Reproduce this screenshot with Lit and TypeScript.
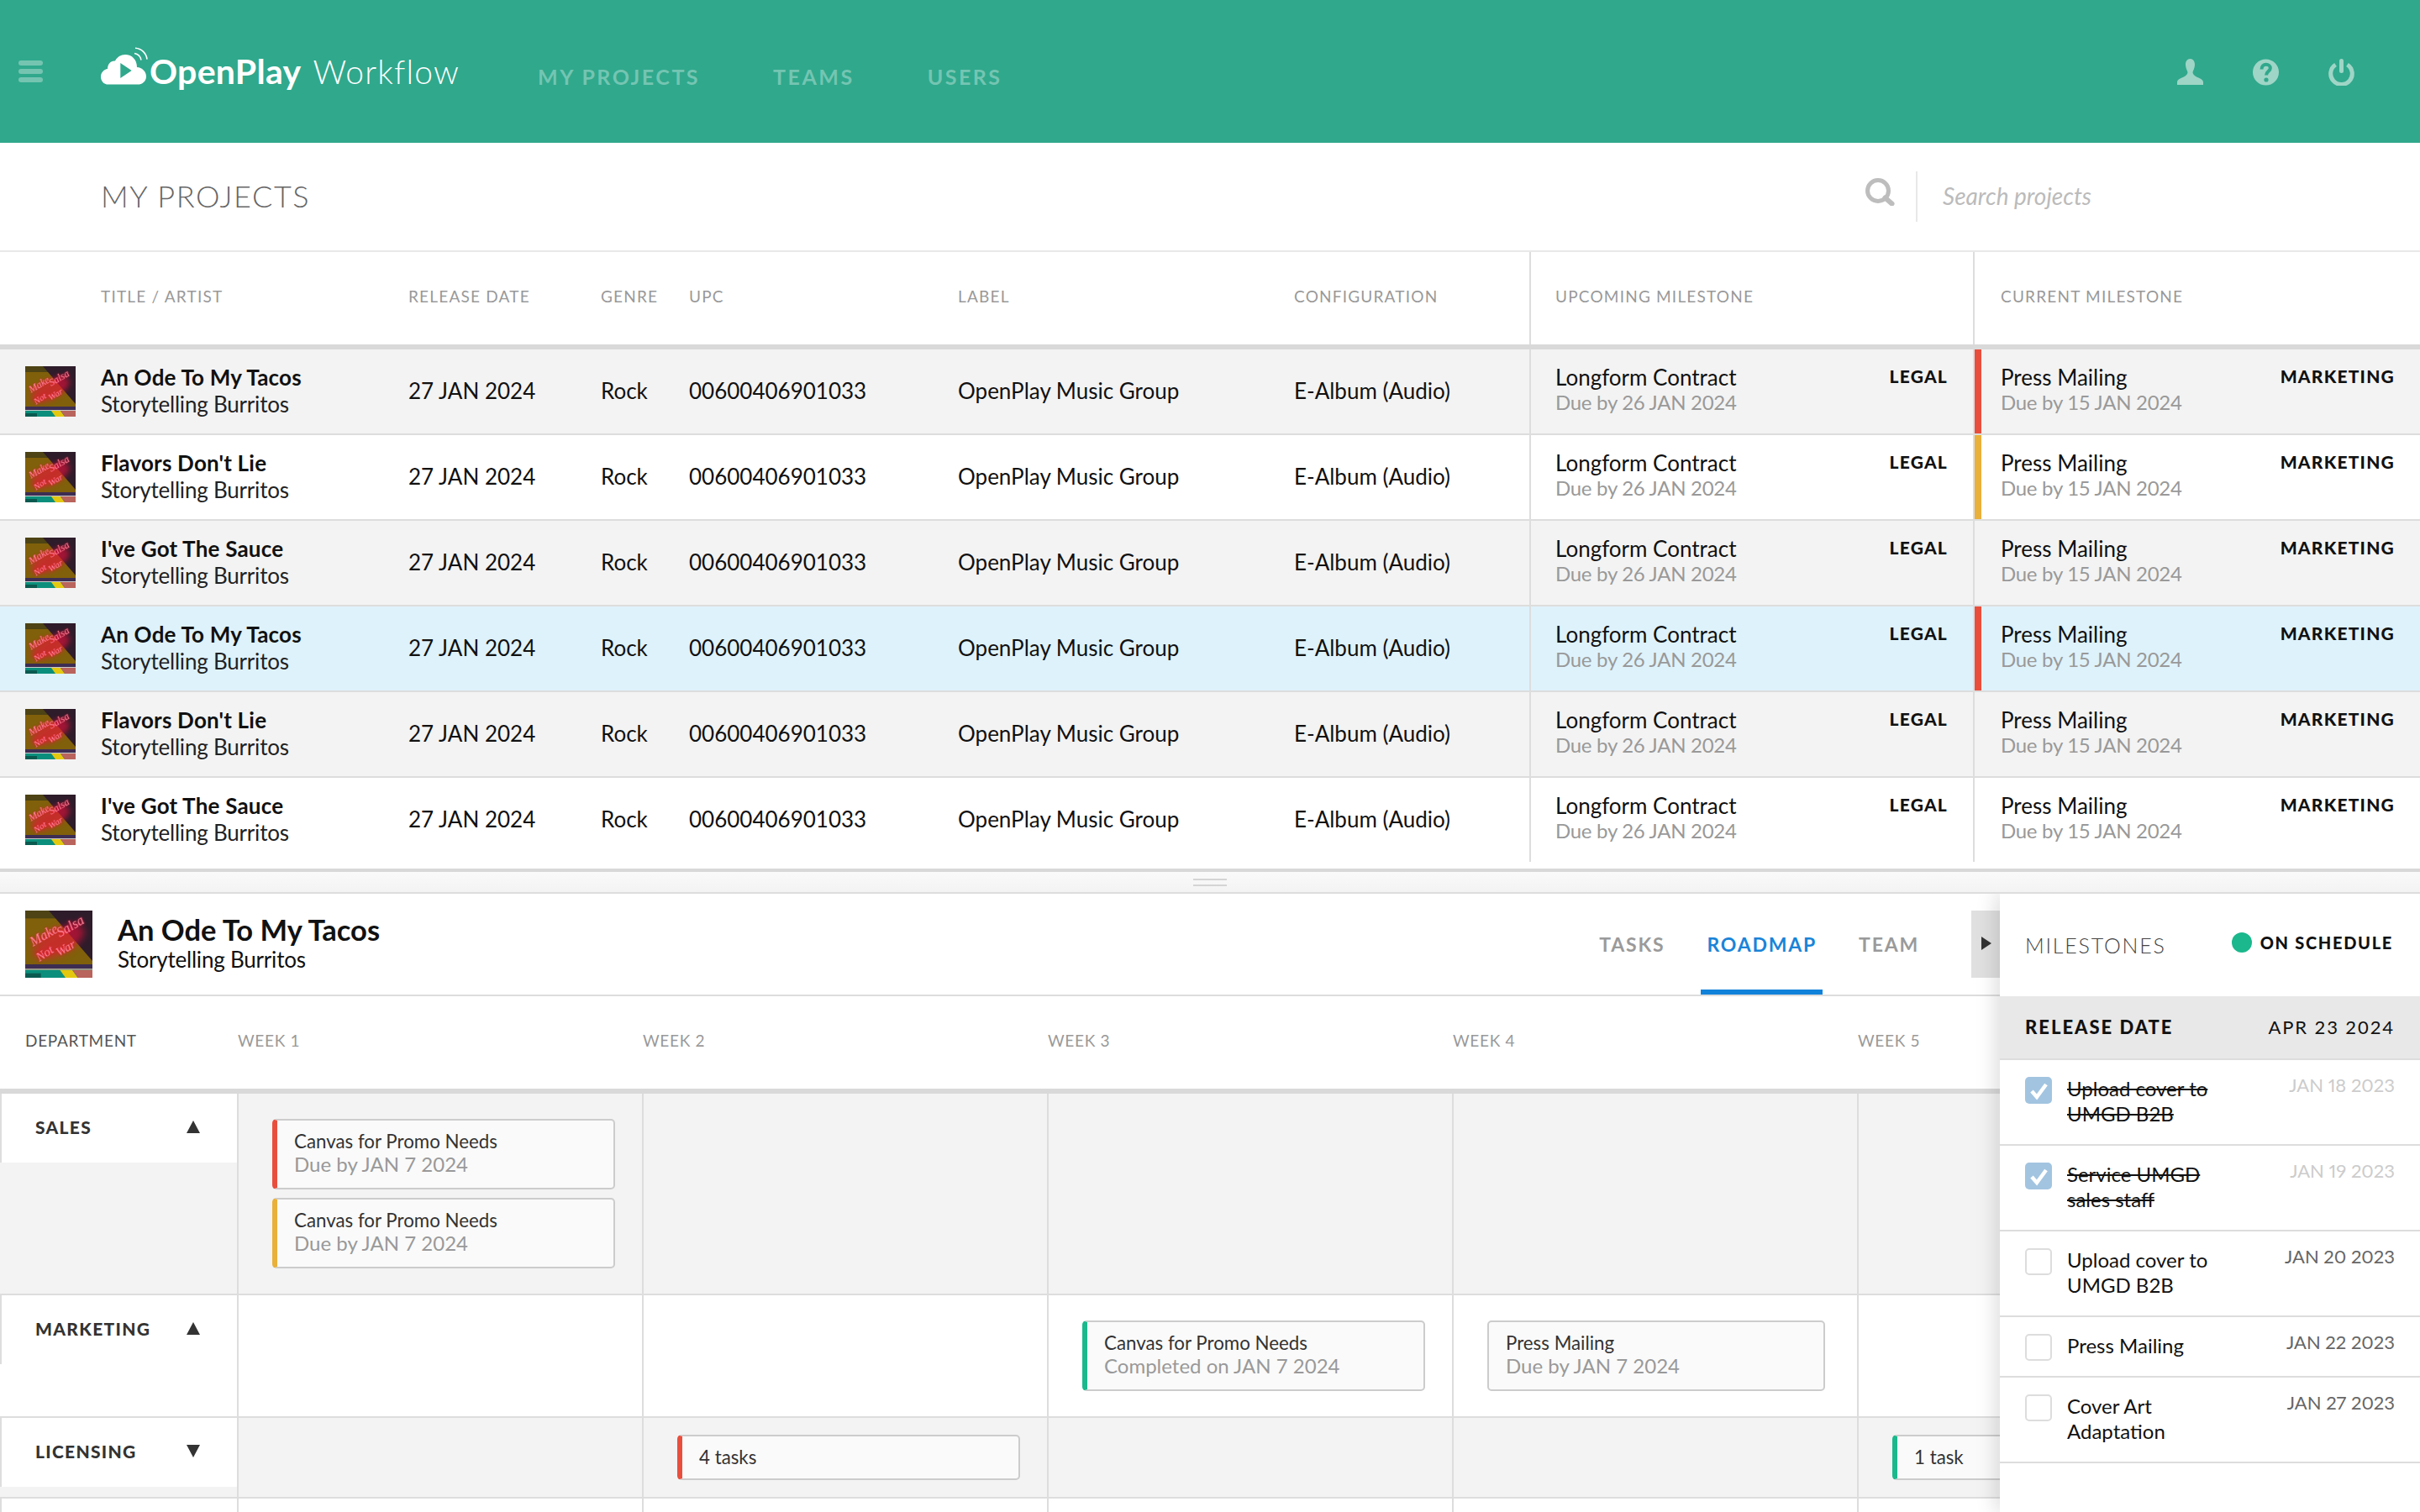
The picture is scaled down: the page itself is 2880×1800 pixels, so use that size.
import { LitElement, html, svg, css } from 'lit';
import { customElement } from 'lit/decorators.js';

const PROJECTS = [
  { title: 'An Ode To My Tacos', row: 'gray', bar: 'red' },
  { title: "Flavors Don't Lie", row: 'white', bar: 'yellow' },
  { title: "I've Got The Sauce", row: 'gray', bar: '' },
  { title: 'An Ode To My Tacos', row: 'blue', bar: 'red' },
  { title: "Flavors Don't Lie", row: 'gray', bar: '' },
  { title: "I've Got The Sauce", row: 'white', bar: '' },
];

const MILESTONES = [
  { lines: ['Upload cover to', 'UMGD B2B'], date: 'JAN 18 2023', done: true },
  { lines: ['Service UMGD', 'sales staff'], date: 'JAN 19 2023', done: true },
  { lines: ['Upload cover to', 'UMGD B2B'], date: 'JAN 20 2023', done: false },
  { lines: ['Press Mailing'], date: 'JAN 22 2023', done: false },
  { lines: ['Cover Art', 'Adaptation'], date: 'JAN 27 2023', done: false },
];

const albumArt = (cls: string) => html`
  <svg class=${cls} viewBox="0 0 60 60" aria-hidden="true">
    ${svg`
      <rect width="60" height="60" fill="#80600a"></rect>
      <rect width="60" height="7" fill="#4d4314"></rect>
      <polygon points="21,0 60,0 60,45" fill="#2e1c2a"></polygon>
      <ellipse class="glow" cx="30" cy="28" rx="25" ry="11" transform="rotate(-28 30 28)"></ellipse>
      <g class="neon">
        <text x="7" y="32" font-size="12" transform="rotate(-30 7 32)">Make</text>
        <text x="31" y="24" font-size="12" transform="rotate(-30 31 24)">Salsa</text>
        <text x="13" y="46" font-size="11" transform="rotate(-34 13 46)">Not</text>
        <text x="30" y="41" font-size="11" transform="rotate(-30 30 41)">War</text>
      </g>
      <rect y="48" width="60" height="4" fill="#3d2d52"></rect>
      <rect y="52" width="60" height="1" fill="#c9c9c9"></rect>
      <rect y="53" width="60" height="7" fill="#0b8f7c"></rect>
      <rect y="56" width="14" height="4" fill="#0a5a50"></rect>
      <polygon points="31,53 42,53 47,60 36,60" fill="#e4c810"></polygon>
      <polygon points="42,53 60,53 60,60 47,60" fill="#b9645c"></polygon>
    `}
  </svg>
`;

@customElement('app-root')
export class AppRoot extends LitElement {
  static styles = css`
    :host {
      display: block;
      width: 2880px;
      height: 1800px;
      overflow: hidden;
      background: #fff;
      color: #111;
      font-family: 'Lato', 'Open Sans', sans-serif;
      font-size: 26px;
    }

    /* cover art */
    .glow {
      fill: #f0103c;
      opacity: 0.6;
      filter: blur(3px);
    }
    .neon text {
      font-family: 'Liberation Serif', serif;
      font-style: italic;
      fill: #ff8a9e;
      filter: drop-shadow(0 0 1px #ff0033);
    }

    /* top bar */
    .topbar {
      height: 170px;
      background: #30a88c;
      display: flex;
      align-items: flex-start;
    }
    .burger {
      width: 29px;
      margin: 72px 0 0 22px;
      display: flex;
      flex-direction: column;
      gap: 4px;
    }
    .burger span {
      height: 6px;
      border-radius: 3px;
      background: #75c4b1;
    }
    .logo {
      display: flex;
      align-items: flex-start;
      margin-left: 67px;
      margin-top: 54px;
      color: #fff;
      width: 522px;
    }
    .logo svg {
      width: 60px;
      height: 50px;
      flex: none;
    }
    .logo b {
      font-size: 41px;
      font-weight: 700;
      line-height: 50px;
      margin: 6px 0 0 0;
      letter-spacing: 0.3px;
    }
    .logo i {
      font-style: normal;
      font-size: 39px;
      font-weight: 300;
      line-height: 50px;
      margin: 6px 0 0 14px;
      letter-spacing: 1.2px;
    }
    .nav {
      display: flex;
      gap: 87px;
      margin-top: 74px;
      font-size: 25px;
      line-height: 34px;
      font-weight: 700;
      letter-spacing: 2.5px;
      color: #74c5b2;
    }
    .top-icons {
      margin: 70px 78px 0 auto;
      display: flex;
      gap: 59px;
    }
    .top-icons svg {
      display: block;
      height: 32px;
      width: 31px;
    }

    /* page title */
    .titlebar {
      height: 128px;
      border-bottom: 2px solid #e8e8e8;
      display: flex;
      align-items: center;
      padding-left: 120px;
    }
    .titlebar h1 {
      margin: -3px 0 0;
      font-size: 36px;
      font-weight: 300;
      letter-spacing: 1.6px;
      color: #666;
    }
    .search {
      margin-left: auto;
      width: 661px;
      height: 60px;
      display: flex;
      align-items: center;
    }
    .search svg {
      width: 36px;
      height: 33px;
      margin-bottom: 12px;
    }
    .search span {
      margin-left: 25px;
      height: 60px;
      line-height: 58px;
      padding-left: 30px;
      border-left: 2px solid #e8e8e8;
      font-size: 28px;
      font-style: italic;
      color: #bbb;
    }

    /* projects table */
    .cols {
      display: grid;
      grid-template-columns: 120px 366px 229px 105px 320px 400px 280px 528px 532px;
    }
    .thead {
      height: 110px;
      border-bottom: 6px solid #d9d9d9;
      font-size: 19px;
      letter-spacing: 1.2px;
      color: #999;
      align-items: center;
    }
    .thead > div {
      padding-bottom: 6px;
    }
    .thead .ms {
      box-sizing: border-box;
      height: 110px;
      display: flex;
      align-items: center;
      border-left: 2px solid #ddd;
    }
    .thead .ms.up {
      padding-left: 29px;
    }
    .thead .ms.cur {
      padding-left: 31px;
    }
    .row {
      height: 100px;
      border-bottom: 2px solid #ddd;
      align-items: center;
    }
    .row.last {
      border-bottom: 0;
    }
    .row.gray {
      background: #f3f3f3;
    }
    .row.white {
      background: #fff;
    }
    .row.blue {
      background: #def2fb;
    }
    .row > div {
      padding-bottom: 2px;
    }
    .thumb {
      display: block;
      width: 60px;
      height: 60px;
      margin-left: 30px;
    }
    .name {
      font-weight: 700;
      line-height: 32px;
      letter-spacing: 0.2px;
      color: #111;
    }
    .artist {
      line-height: 32px;
      letter-spacing: -0.2px;
      color: #222;
    }
    .row .ms {
      align-self: stretch;
      border-left: 2px solid #ddd;
      display: flex;
      padding-bottom: 0;
    }
    .bar {
      width: 8px;
      flex: none;
    }
    .bar.red {
      background: #e94e3d;
    }
    .bar.yellow {
      background: #e9b03a;
    }
    .ms-body {
      flex: 1;
      display: flex;
      justify-content: space-between;
      padding-right: 30px;
    }
    .ms.up .ms-body {
      padding-left: 29px;
    }
    .ms.cur .ms-body {
      padding-left: 23px;
    }
    .ms-text {
      padding-top: 18px;
      line-height: 30px;
    }
    .due {
      color: #999;
      font-size: 24px;
      letter-spacing: -0.3px;
    }
    .tag {
      padding-top: 17px;
      line-height: 30px;
      font-size: 21px;
      font-weight: 900;
      letter-spacing: 1.2px;
      color: #111;
    }
    .tail {
      height: 8px;
    }
    .handle {
      height: 24px;
      border-top: 4px solid #d8d8d8;
      border-bottom: 2px solid #ddd;
      background: linear-gradient(#fafafa, #f3f3f3);
      display: flex;
      flex-direction: column;
      align-items: center;
      justify-content: center;
      gap: 5px;
    }
    .handle span {
      width: 40px;
      height: 2px;
      background: #d4d4d4;
    }

    /* lower area */
    .lower {
      position: relative;
      height: 736px;
      overflow: hidden;
    }
    .detail-head {
      height: 120px;
      border-bottom: 2px solid #ddd;
      display: flex;
      align-items: flex-start;
      padding-right: 500px;
    }
    .detail-art {
      display: block;
      width: 80px;
      height: 80px;
      margin: 20px 0 0 30px;
      flex: none;
    }
    .detail-title {
      margin: 24px 0 0 30px;
    }
    .detail-title .big {
      font-size: 34.5px;
      line-height: 38px;
      font-weight: 700;
    }
    .detail-title .artist {
      line-height: 32px;
      color: #111;
    }
    .tabs {
      margin-left: auto;
      display: flex;
      gap: 36px;
    }
    .tab {
      box-sizing: border-box;
      height: 120px;
      padding: 6px 7px 0;
      border-bottom: 6px solid transparent;
      display: flex;
      align-items: center;
      font-size: 23px;
      font-weight: 700;
      letter-spacing: 1.8px;
      color: #9a9a9a;
    }
    .tab.on {
      color: #1a84d8;
      border-bottom-color: #1182d9;
    }
    .toggle {
      width: 34px;
      height: 80px;
      margin: 20px 0 0 55px;
      background: #e0e0e0;
      display: flex;
      align-items: center;
      justify-content: center;
    }
    .toggle::before {
      content: '';
      border-left: 12px solid #333;
      border-top: 8px solid transparent;
      border-bottom: 8px solid transparent;
      margin-top: -2px;
      margin-left: 2px;
    }

    /* roadmap */
    .weeks {
      display: grid;
      grid-template-columns: 282px repeat(5, 482px);
    }
    .weeks.head {
      grid-template-columns: 283px repeat(5, 482px);
      height: 110px;
      border-bottom: 6px solid #d9d9d9;
      align-items: center;
      font-size: 19px;
      letter-spacing: 0.7px;
      color: #999;
    }
    .weeks.head > div {
      padding-bottom: 6px;
    }
    .weeks.head .dept {
      padding-left: 30px;
      color: #555;
    }
    .lane {
      border-bottom: 2px solid #ddd;
    }
    .lane.gray {
      background: #f3f3f3;
    }
    .lane.white {
      background: #fff;
    }
    .lane-name {
      box-sizing: border-box;
      height: 82px;
      border-left: 2px solid #ddd;
      background: #fff;
      padding: 0 44px 3px 40px;
      display: flex;
      align-items: center;
      justify-content: space-between;
      font-size: 21px;
      font-weight: 900;
      letter-spacing: 1.3px;
      color: #333;
    }
    .up-arrow,
    .down-arrow {
      border-left: 8px solid transparent;
      border-right: 8px solid transparent;
    }
    .up-arrow {
      border-bottom: 15px solid #333;
    }
    .down-arrow {
      border-top: 15px solid #333;
    }
    .cell {
      border-left: 2px solid #ddd;
      padding: 30px 0 0 40px;
      display: flex;
      flex-direction: column;
      gap: 10px;
    }
    .cell.slim {
      padding-top: 20px;
      padding-bottom: 20px;
    }
    .card {
      box-sizing: border-box;
      width: 408px;
      height: 84px;
      border: 2px solid #ccc;
      border-radius: 5px;
      background: #fafafa;
      padding: 0 0 4px 20px;
      display: flex;
      flex-direction: column;
      justify-content: center;
      font-size: 22.3px;
      color: #333;
      flex: none;
    }
    .card.plain {
      width: 402px;
    }
    .card.slim {
      height: 54px;
      padding-bottom: 2px;
    }
    .card.red {
      border-left: 6px solid #e94e3d;
    }
    .card.yellow {
      border-left: 6px solid #e9b03a;
    }
    .card.green {
      border-left: 6px solid #1ab88c;
    }
    .card .line1 {
      line-height: 27px;
    }
    .card .line2 {
      line-height: 27px;
      font-size: 24px;
      color: #999;
    }

    /* milestones panel */
    .panel {
      position: absolute;
      top: 0;
      right: 0;
      bottom: 0;
      width: 500px;
      background: #fff;
      box-shadow: -6px 0 22px rgba(0, 0, 0, 0.13);
    }
    .panel-head {
      box-sizing: border-box;
      height: 122px;
      display: flex;
      align-items: center;
      padding: 0 32px 0 30px;
      justify-content: space-between;
    }
    .panel-head h2 {
      margin: 0;
      font-size: 25px;
      font-weight: 300;
      letter-spacing: 1.8px;
      color: #444;
    }
    .status {
      display: flex;
      align-items: center;
      gap: 10px;
      font-size: 20px;
      font-weight: 900;
      letter-spacing: 1.7px;
      margin-top: -6px;
    }
    .status i {
      width: 24px;
      height: 24px;
      border-radius: 50%;
      background: #1ab88c;
    }
    .release {
      box-sizing: border-box;
      height: 76px;
      background: #e8e8e8;
      border-bottom: 2px solid #ddd;
      display: flex;
      align-items: center;
      justify-content: space-between;
      padding: 0 30px 2px 30px;
      font-size: 22px;
      letter-spacing: 1.9px;
      color: #111;
    }
    .release b {
      font-weight: 900;
      letter-spacing: 2px;
    }
    .task {
      border-bottom: 2px solid #ddd;
      padding: 20px 30px 0 30px;
      display: flex;
      align-items: flex-start;
    }
    .task.tall {
      height: 80px;
    }
    .task.short {
      height: 50px;
    }
    .check {
      box-sizing: border-box;
      width: 32px;
      height: 32px;
      border: 2px solid #ddd;
      border-radius: 5px;
      flex: none;
      background: #fff;
    }
    .check.on {
      border: 0;
      background: #a2c4e0;
    }
    .check svg {
      display: block;
      width: 32px;
      height: 32px;
    }
    .task-text {
      margin: -1px 0 0 18px;
      line-height: 30px;
      font-size: 24px;
      color: #111;
    }
    .task.done .task-text {
      text-decoration: line-through;
    }
    .task-date {
      margin: -5px 0 0 auto;
      line-height: 30px;
      font-size: 22px;
      font-variant-numeric: proportional-nums;
      color: #666;
    }
    .task.done .task-date {
      color: #ccc;
    }
  `;

  renderTable() {
    return html`
      <div class="cols thead">
        <div></div>
        <div>TITLE / ARTIST</div>
        <div>RELEASE DATE</div>
        <div>GENRE</div>
        <div>UPC</div>
        <div>LABEL</div>
        <div>CONFIGURATION</div>
        <div class="ms up">UPCOMING MILESTONE</div>
        <div class="ms cur">CURRENT MILESTONE</div>
      </div>
      ${PROJECTS.map(
        (p, i) => html`
          <div class="cols row ${p.row} ${i === PROJECTS.length - 1 ? 'last' : ''}">
            ${albumArt('thumb')}
            <div>
              <div class="name">${p.title}</div>
              <div class="artist">Storytelling Burritos</div>
            </div>
            <div>27 JAN 2024</div>
            <div>Rock</div>
            <div>00600406901033</div>
            <div>OpenPlay Music Group</div>
            <div>E-Album (Audio)</div>
            <div class="ms up">
              <div class="ms-body">
                <div class="ms-text">
                  <div>Longform Contract</div>
                  <div class="due">Due by 26 JAN 2024</div>
                </div>
                <div class="tag">LEGAL</div>
              </div>
            </div>
            <div class="ms cur">
              <div class="bar ${p.bar}"></div>
              <div class="ms-body">
                <div class="ms-text">
                  <div>Press Mailing</div>
                  <div class="due">Due by 15 JAN 2024</div>
                </div>
                <div class="tag">MARKETING</div>
              </div>
            </div>
          </div>
        `
      )}
      <div class="tail"></div>
    `;
  }

  renderRoadmap() {
    return html`
      <div class="weeks head">
        <div class="dept">DEPARTMENT</div>
        <div>WEEK 1</div>
        <div>WEEK 2</div>
        <div>WEEK 3</div>
        <div>WEEK 4</div>
        <div>WEEK 5</div>
      </div>
      <div class="weeks lane gray" style="height: 238px">
        <div>
          <div class="lane-name"><span>SALES</span><span class="up-arrow"></span></div>
        </div>
        <div class="cell">
          <div class="card red">
            <div class="line1">Canvas for Promo Needs</div>
            <div class="line2">Due by JAN 7 2024</div>
          </div>
          <div class="card yellow">
            <div class="line1">Canvas for Promo Needs</div>
            <div class="line2">Due by JAN 7 2024</div>
          </div>
        </div>
        <div class="cell"></div>
        <div class="cell"></div>
        <div class="cell"></div>
        <div class="cell"></div>
      </div>
      <div class="weeks lane white" style="height: 144px">
        <div>
          <div class="lane-name"><span>MARKETING</span><span class="up-arrow"></span></div>
        </div>
        <div class="cell"></div>
        <div class="cell"></div>
        <div class="cell">
          <div class="card green">
            <div class="line1">Canvas for Promo Needs</div>
            <div class="line2">Completed on JAN 7 2024</div>
          </div>
        </div>
        <div class="cell">
          <div class="card plain">
            <div class="line1">Press Mailing</div>
            <div class="line2">Due by JAN 7 2024</div>
          </div>
        </div>
        <div class="cell"></div>
      </div>
      <div class="weeks lane gray" style="height: 94px">
        <div>
          <div class="lane-name"><span>LICENSING</span><span class="down-arrow"></span></div>
        </div>
        <div class="cell slim"></div>
        <div class="cell slim"><div class="card slim red"><div class="line1">4 tasks</div></div></div>
        <div class="cell slim"></div>
        <div class="cell slim"></div>
        <div class="cell slim"><div class="card slim green"><div class="line1">1 task</div></div></div>
      </div>
      <div class="weeks lane white" style="height: 40px">
        <div><div class="lane-name"></div></div>
        <div class="cell"></div>
        <div class="cell"></div>
        <div class="cell"></div>
        <div class="cell"></div>
        <div class="cell"></div>
      </div>
    `;
  }

  renderPanel() {
    return html`
      <aside class="panel">
        <div class="panel-head">
          <h2>MILESTONES</h2>
          <div class="status"><i></i>ON SCHEDULE</div>
        </div>
        <div class="release"><b>RELEASE DATE</b><span>APR 23 2024</span></div>
        ${MILESTONES.map(
          (m) => html`
            <div class="task ${m.lines.length > 1 ? 'tall' : 'short'} ${m.done ? 'done' : ''}">
              <div class="check ${m.done ? 'on' : ''}">
                ${m.done
                  ? html`<svg viewBox="0 0 32 32">
                      <path d="M8 17L14 24L25 9" fill="none" stroke="#fff" stroke-width="4.5"></path>
                    </svg>`
                  : ''}
              </div>
              <div class="task-text">${m.lines.map((l) => html`<div>${l}</div>`)}</div>
              <div class="task-date">${m.date}</div>
            </div>
          `
        )}
      </aside>
    `;
  }

  render() {
    return html`
      <header class="topbar">
        <div class="burger"><span></span><span></span><span></span></div>
        <div class="logo">
          <svg viewBox="0 0 60 50">
            <path
              fill="#fff"
              fill-rule="evenodd"
              d="M11 46.6C5 46.6 2 42 2 37.5C2 32 6 28.5 10 28C10 22 14 18 19 18.5C21 14 26 11 31 11C39 11 45 17 45 26C51 26.5 56 31 56 37C56 43 51 46.6 46 46.6ZM25.3 21L38.7 30L25.3 39Z"
            ></path>
            <path d="M42 9.5A10 10 0 0 1 50 17.5M43 3.3A15 15 0 0 1 57 16.7" fill="none" stroke="#fff" stroke-width="1.6"></path>
          </svg>
          <b>OpenPlay</b><i>Workflow</i>
        </div>
        <nav class="nav"><span>MY PROJECTS</span><span>TEAMS</span><span>USERS</span></nav>
        <div class="top-icons">
          <svg viewBox="0 0 31 32">
            <path
              fill="#9fd5c6"
              d="M15.5 0C12 0 10 3 10 7C10 11 12 14 12.5 16C12.5 18 11 20 7 22C3 23.5 0 25 0 28V31H31V28C31 25 28 23.5 24 22C20 20 18.5 18 18.5 16C19 14 21 11 21 7C21 3 19 0 15.5 0Z"
            ></path>
          </svg>
          <svg viewBox="0 0 31 32">
            <circle cx="15.5" cy="16" r="15.5" fill="#9fd5c6"></circle>
            <path d="M10.5 12.5C10.5 8.5 13 6.8 15.8 6.8C18.6 6.8 20.8 8.8 20.8 11.2C20.8 14.6 16 15 16 19.5" fill="none" stroke="#30a88c" stroke-width="4"></path>
            <circle cx="16" cy="25" r="2.6" fill="#30a88c"></circle>
          </svg>
          <svg viewBox="0 0 31 32">
            <path d="M8.5 7A12.8 12.8 0 1 0 22.5 7" fill="none" stroke="#9fd5c6" stroke-width="5"></path>
            <path d="M15.5 2.5V14.5" fill="none" stroke="#9fd5c6" stroke-width="5" stroke-linecap="round"></path>
          </svg>
        </div>
      </header>
      <div class="titlebar">
        <h1>MY PROJECTS</h1>
        <div class="search">
          <svg viewBox="0 0 36 33">
            <circle cx="16" cy="15" r="12.5" fill="none" stroke="#bdbdbd" stroke-width="5"></circle>
            <path d="M24.5 23.5L32.5 30.5" fill="none" stroke="#bdbdbd" stroke-width="6" stroke-linecap="round"></path>
          </svg>
          <span>Search projects</span>
        </div>
      </div>
      ${this.renderTable()}
      <div class="handle"><span></span><span></span></div>
      <section class="lower">
        <div class="detail-head">
          ${albumArt('detail-art')}
          <div class="detail-title">
            <div class="big">An Ode To My Tacos</div>
            <div class="artist">Storytelling Burritos</div>
          </div>
          <div class="tabs">
            <div class="tab">TASKS</div>
            <div class="tab on">ROADMAP</div>
            <div class="tab">TEAM</div>
          </div>
          <div class="toggle"></div>
        </div>
        ${this.renderRoadmap()} ${this.renderPanel()}
      </section>
    `;
  }
}
